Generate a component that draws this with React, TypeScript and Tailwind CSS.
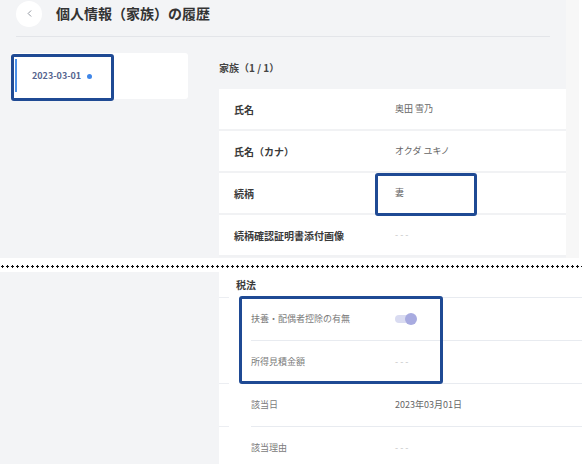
import { ChevronLeft } from "lucide-react";

const font = { fontFamily: '"Noto Sans CJK JP", "Noto Sans", sans-serif' };

const familyRows = [
  { label: "氏名", value: "奥田 雪乃", muted: false },
  { label: "氏名（カナ）", value: "オクダ ユキノ", muted: false },
  { label: "続柄", value: "妻", muted: false },
  { label: "続柄確認証明書添付画像", value: "- - -", muted: true },
];

function Toggle() {
  return (
    <div className="relative flex h-[12px] w-[24px] items-center">
      <div className="h-[8px] w-[18px] rounded-full bg-[#d9dbf1]" />
      <div className="absolute left-[10px] top-0 h-[12px] w-[12px] rounded-full bg-[#a8abe0]" />
    </div>
  );
}

function TaxRow({
  label,
  children,
  edge,
}: {
  label: string;
  children: React.ReactNode;
  edge: boolean;
}) {
  return (
    <div className="flex h-[43px]">
      <div className={`w-[10px] ${edge ? "border-t border-[#eceef2]" : ""}`} />
      <div className="w-[22px]" />
      <div className="flex flex-1 items-center border-t border-[#e8ebf0]">
        <div className="w-[144px] text-[9px] text-[#7b7b7b]">{label}</div>
        <div className="text-[9px] text-[#666]">{children}</div>
      </div>
    </div>
  );
}

export default function App() {
  return (
    <div className="h-[464px] w-[582px] overflow-hidden bg-white" style={font}>
      {/* upper part */}
      <div className="flex h-[258px]">
        <div className="w-[566px] bg-[#f3f4f6]">
          <div className="mx-[16px] h-[37px] border-b border-[#e3e5e9]">
            <div className="flex h-[27px] items-center">
              <div className="flex h-[26px] w-[26px] items-center justify-center rounded-full bg-white">
                <ChevronLeft size={11} strokeWidth={2} className="text-[#8a8f99]" />
              </div>
              <div className="ml-[14px] text-[14px] font-bold text-[#333]">
                個人情報（家族）の履歴
              </div>
            </div>
          </div>

          <div className="mt-[16px] flex pl-[11px]">
            <div className="relative h-[46px] w-[177px] rounded-[3px] bg-white">
              <div className="absolute left-[4px] top-[6px] h-[33px] w-[2px] bg-[#4a8fe7]" />
              <div className="flex h-full items-center pl-[21px]">
                <span className="text-[9px] font-semibold text-[#56658f]">2023-03-01</span>
                <span className="ml-[6px] h-[5px] w-[5px] rounded-full bg-[#3f86e8]" />
              </div>
              <div className="absolute left-0 top-[1px] h-[47px] w-[103px] rounded-[3px] border-[3px] border-[#1f4a94]" />
            </div>

            <div className="ml-[31px] w-[347px]">
              <div className="flex h-[28px] items-center text-[10px] font-semibold text-[#444]">
                家族（1 / 1）
              </div>
              <div className="relative mt-[8px] bg-white">
                {familyRows.map((r) => (
                  <div
                    key={r.label}
                    className="flex h-[42px] items-center border-b-2 border-[#f1f2f4] pl-[15px]"
                  >
                    <div className="w-[161px] text-[10px] font-semibold text-[#3a3a3a]">
                      {r.label}
                    </div>
                    <div
                      className={`text-[9px] ${r.muted ? "text-[#c4c4c4]" : "text-[#666]"}`}
                    >
                      {r.value}
                    </div>
                  </div>
                ))}
                <div className="absolute left-[156px] top-[84px] h-[43px] w-[102px] rounded-[3px] border-[3px] border-[#1f4a94]" />
              </div>
            </div>
          </div>
        </div>
        <div className="w-[13px] bg-[#f7f7f7]" />
        <div className="flex-1 bg-white" />
      </div>

      {/* dotted divider */}
      <div className="flex h-[14px] items-center pt-[2px]">
        <div className="h-[3px] w-full bg-[radial-gradient(circle,#111_1px,transparent_1.3px)] bg-[length:5px_3px]" />
      </div>

      {/* lower part */}
      <div className="flex h-[192px]">
        <div className="w-[219px] bg-[#f3f4f6]" />
        <div className="relative flex-1 bg-white">
          <div className="flex h-[25px] items-center pl-[17px] text-[10px] font-semibold text-[#3a3a3a]">
            税法
          </div>
          <TaxRow label="扶養・配偶者控除の有無" edge>
            <Toggle />
          </TaxRow>
          <TaxRow label="所得見積金額" edge={false}>
            <span className="text-[#c4c4c4]">- - -</span>
          </TaxRow>
          <TaxRow label="該当日" edge>
            2023年03月01日
          </TaxRow>
          <TaxRow label="該当理由" edge>
            <span className="text-[#c4c4c4]">- - -</span>
          </TaxRow>
          <div className="absolute left-[20px] top-[24px] h-[88px] w-[204px] rounded-[3px] border-[3px] border-[#1f4a94]" />
        </div>
      </div>
    </div>
  );
}
